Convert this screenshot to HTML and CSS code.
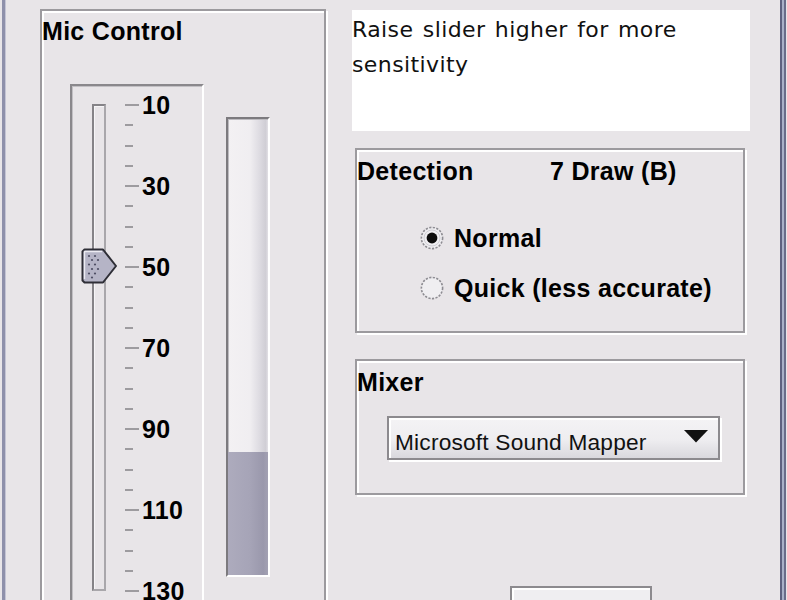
FILE: index.html
```html
<!DOCTYPE html>
<html lang="en">
<head>
<meta charset="utf-8">
<title>Mic Control</title>
<link rel="stylesheet" href="styles.css">
</head>
<body>
<div class="frame">
  <section class="panel mic">
    <h2 class="title">Mic Control</h2>
    <div class="mic-body">
      <div class="slider-box">
        <div class="track">
          <svg class="thumb" width="37" height="36" viewBox="0 0 37 36">
            <path d="M3.5 1.5H22L35 18L22 34.5H3.5L1.5 32.5V3.5Z" fill="#b5b4c6" stroke="#2e2e36" stroke-width="2" stroke-linejoin="round"/>
            <polyline points="3.5,31 3.5,3.5 21,3.5" fill="none" stroke="#ecebf2" stroke-width="1.4"/>
            <g fill="#4e4e64">
              <circle cx="8" cy="8" r="1.1"/><circle cx="14" cy="8" r="1.1"/>
              <circle cx="11" cy="12" r="1.1"/><circle cx="17" cy="12" r="1.1"/>
              <circle cx="8" cy="16.5" r="1.1"/><circle cx="14" cy="16.5" r="1.1"/>
              <circle cx="11" cy="21" r="1.1"/><circle cx="17" cy="21" r="1.1"/>
              <circle cx="8" cy="25.5" r="1.1"/><circle cx="14" cy="25.5" r="1.1"/>
              <circle cx="11" cy="29.5" r="1.1"/>
            </g>
          </svg>
        </div>
        <div class="scale">
          <div class="tick major"><i></i><span>10</span></div>
          <div class="tick"><i></i></div>
          <div class="tick"><i></i></div>
          <div class="tick"><i></i></div>
          <div class="tick major"><i></i><span>30</span></div>
          <div class="tick"><i></i></div>
          <div class="tick"><i></i></div>
          <div class="tick"><i></i></div>
          <div class="tick major"><i></i><span>50</span></div>
          <div class="tick"><i></i></div>
          <div class="tick"><i></i></div>
          <div class="tick"><i></i></div>
          <div class="tick major"><i></i><span>70</span></div>
          <div class="tick"><i></i></div>
          <div class="tick"><i></i></div>
          <div class="tick"><i></i></div>
          <div class="tick major"><i></i><span>90</span></div>
          <div class="tick"><i></i></div>
          <div class="tick"><i></i></div>
          <div class="tick"><i></i></div>
          <div class="tick major"><i></i><span>110</span></div>
          <div class="tick"><i></i></div>
          <div class="tick"><i></i></div>
          <div class="tick"><i></i></div>
          <div class="tick major"><i></i><span>130</span></div>
        </div>
      </div>
      <div class="meter"><div class="level" style="height:27%"></div></div>
    </div>
  </section>

  <div class="side">
    <div class="hint">Raise slider higher for more sensitivity</div>

    <section class="panel detection">
      <div class="head">
        <h2 class="title">Detection</h2>
        <span class="status">7 Draw (B)</span>
      </div>
      <div class="radios">
        <label class="radio">
          <svg width="24" height="24" viewBox="0 0 24 24">
            <circle cx="12" cy="12" r="10.6" fill="#efeef1" stroke="#8d8c92" stroke-width="1.6" stroke-dasharray="2.2 1.4"/>
            <circle cx="12" cy="12" r="8" fill="none" stroke="#cfced4" stroke-width="1"/>
            <circle cx="12" cy="12" r="5.4" fill="#0c0c0c"/>
          </svg>
          <span>Normal</span>
        </label>
        <label class="radio">
          <svg width="24" height="24" viewBox="0 0 24 24">
            <circle cx="12" cy="12" r="10.6" fill="#efeef1" stroke="#8d8c92" stroke-width="1.6" stroke-dasharray="2.2 1.4"/>
          </svg>
          <span>Quick (less accurate)</span>
        </label>
      </div>
    </section>

    <section class="panel mixer">
      <h2 class="title">Mixer</h2>
      <div class="combo">
        <span class="combo-text">Microsoft Sound Mapper</span>
        <svg class="arrow" width="24" height="13" viewBox="0 0 24 13"><polygon points="0,0 24,0 12,12.5" fill="#111"/></svg>
      </div>
    </section>

    <button class="btn" type="button"></button>
  </div>
</div>
</body>
</html>
```
FILE: styles.css
```css
* { box-sizing: border-box; margin: 0; padding: 0; }

html, body { background: #e8e5e8; }
body { width: 787px; height: 600px; overflow: hidden; }

.frame {
  display: flex;
  align-items: flex-start;
  margin-left: 2px;
  width: 780px;
  height: 600px;
  padding: 9px 0 0 35px;
  border-left: 3px solid #8e90aa;
  border-right: 2px solid #5f6180;
  box-shadow: inset 1px 0 0 #c4c4d4, 2px 0 0 #aab0c8, 4px 0 0 #6a6c8a;
  overflow: hidden;
}

.panel {
  border: 2px solid #9c9a9e;
  box-shadow: inset 2px 2px 0 #fff, 2px 2px 0 #fff;
  flex: none;
}

.title,
.status,
.radio,
.tick span {
  font-family: "Liberation Sans", Arial, sans-serif;
  font-weight: bold;
  font-size: 25px;
  line-height: 28px;
  letter-spacing: 0.3px;
  color: #000;
}

/* ---- Mic Control ---- */
.mic {
  width: 286px;
  height: 640px;
  padding-top: 6px;
}

.mic-body {
  display: flex;
  align-items: flex-start;
  padding-left: 28px;
  margin-top: 39px;
}

.slider-box {
  position: relative;
  display: flex;
  align-items: flex-start;
  flex: none;
  width: 134px;
  height: 560px;
  padding: 18px 0 0 20px;
  border: 2px solid;
  border-color: #8a888c #fff #fff #8a888c;
  box-shadow: inset 1px 1px 0 #c2c0c4;
}

.track {
  position: relative;
  flex: none;
  width: 14px;
  height: 487px;
  border: 2px solid;
  border-color: #858387 #a9a7ab #a9a7ab #858387;
  box-shadow: inset 1px 1px 0 #f6f5f7;
}

.thumb {
  position: absolute;
  left: -13px;
  top: 142px;
}

.scale {
  display: flex;
  flex-direction: column;
  justify-content: space-between;
  height: 486px;
  margin: 1px 0 0 19px;
}

.tick {
  height: 0;
  display: flex;
  align-items: center;
}

.tick i {
  display: block;
  width: 8px;
  height: 2px;
  background: #9d9b9f;
}

.tick.major i { width: 14px; }

.tick span {
  line-height: 25px;
  margin-left: 3px;
}

.meter {
  flex: none;
  display: flex;
  flex-direction: column;
  justify-content: flex-end;
  width: 44px;
  height: 460px;
  margin: 33px 0 0 22px;
  border: 2px solid;
  border-color: #7c7a7e #fff #fff #7c7a7e;
  box-shadow: inset 1px 1px 0 #bdbbc0;
  background: linear-gradient(90deg, #f3f1f3 0%, #f0eef1 55%, #dedce2 78%, #d0ced5 94%, #e2e0e5 100%);
}

.level {
  background: linear-gradient(90deg, #adabbd 0%, #a6a4b7 55%, #9a98ac 88%, #a3a1b3 100%);
}

/* ---- Right column ---- */
.side {
  flex: none;
  width: 398px;
  margin: 1px 0 0 26px;
  display: flex;
  flex-direction: column;
  align-items: flex-start;
}

.hint {
  width: 398px;
  height: 121px;
  padding-top: 2px;
  background: #fff;
  font-family: "DejaVu Sans", Verdana, sans-serif;
  font-size: 22px;
  line-height: 35px;
  letter-spacing: 0.4px;
  word-spacing: 2px;
  color: #111;
}

.detection {
  width: 390px;
  height: 185px;
  margin: 17px 0 0 3px;
  padding-top: 7px;
}

.head { display: flex; }
.head .title { width: 193px; }

.radios {
  display: flex;
  flex-direction: column;
  gap: 22px;
  margin: 39px 0 0 63px;
}

.radio {
  display: flex;
  align-items: center;
  gap: 10px;
  height: 28px;
}

.radio svg { flex: none; }

.mixer {
  width: 390px;
  height: 136px;
  margin: 26px 0 0 3px;
  padding-top: 7px;
}

.combo {
  display: flex;
  align-items: flex-start;
  justify-content: space-between;
  width: 333px;
  height: 44px;
  margin: 20px 0 0 30px;
  padding: 0 10px 0 6px;
  border: 2px solid #8c8a8e;
  box-shadow: inset 2px 2px 0 #fff, 2px 2px 0 #fff;
  background: linear-gradient(#f4f3f5 0%, #eeedf0 55%, #d9d8dd 100%);
}

.combo-text {
  margin-top: 11px;
  font-family: "Liberation Sans", Arial, sans-serif;
  font-size: 22.7px;
  line-height: 26px;
  letter-spacing: 0.2px;
  color: #111;
}

.arrow { margin-top: 12px; flex: none; }

.btn {
  flex: none;
  width: 142px;
  height: 44px;
  margin: 91px 0 0 158px;
  border: 2px solid #8c8a8e;
  box-shadow: inset 2px 2px 0 #fff;
  background: #efeef1;
  font: inherit;
}
```
